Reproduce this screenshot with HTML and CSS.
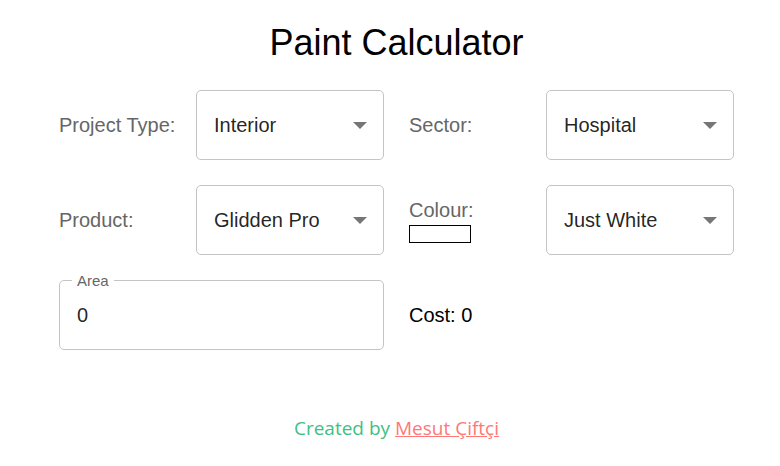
FILE: index.html
```html
<!DOCTYPE html>
<html>
<head>
<meta charset="utf-8">
<link rel="stylesheet" href="styles.css">
</head>
<body>
<div class="app">
  <h1 class="title">Paint Calculator</h1>
  <div class="form">
    <div class="label">Project Type:</div>
    <div class="select"><span>Interior</span><svg class="arrow" viewBox="0 0 14 7"><path d="M0 0h14L7 7z"/></svg></div>
    <div class="label second">Sector:</div>
    <div class="select"><span>Hospital</span><svg class="arrow" viewBox="0 0 14 7"><path d="M0 0h14L7 7z"/></svg></div>

    <div class="label">Product:</div>
    <div class="select"><span>Glidden Pro</span><svg class="arrow" viewBox="0 0 14 7"><path d="M0 0h14L7 7z"/></svg></div>
    <div class="label second colour">Colour:<div class="swatch"></div></div>
    <div class="select"><span>Just White</span><svg class="arrow" viewBox="0 0 14 7"><path d="M0 0h14L7 7z"/></svg></div>

    <div class="field">
      <span class="legend">Area</span>
      <span class="value">0</span>
    </div>
    <div class="cost">Cost: 0</div>
  </div>
  <footer class="footer">Created by <a class="link" href="#">Mesut Çiftçi</a></footer>
</div>
</body>
</html>
```

FILE: styles.css
```css
html, body {
  margin: 0;
  padding: 0;
  background: #fff;
}
body {
  padding-left: 13px;
  font-family: "Liberation Sans", Arial, sans-serif;
}
.app {
  width: 675px;
  margin: 0 auto;
}
.title {
  margin: 0;
  padding-top: 20px;
  height: 70px;
  box-sizing: border-box;
  font-size: 36px;
  font-weight: 400;
  text-align: center;
  color: #000;
  line-height: 46px;
}
.form {
  display: grid;
  grid-template-columns: 137px 188px 162px 188px;
  row-gap: 25px;
  margin-top: 20px;
}
.label {
  color: #666;
  font-size: 20px;
  height: 70px;
  display: flex;
  align-items: center;
}
.label.second {
  margin-left: 25px;
}
.label.colour {
  flex-direction: column;
  align-items: flex-start;
  justify-content: center;
  padding-top: 2px;
  box-sizing: border-box;
}
.swatch {
  width: 60px;
  height: 16px;
  border: 1px solid #000;
  background: #fff;
  margin-top: 3px;
}
.select {
  height: 70px;
  box-sizing: border-box;
  border: 1px solid #c4c4c4;
  border-radius: 5px;
  display: flex;
  align-items: center;
  justify-content: space-between;
  padding: 0 16px 0 17px;
  font-size: 20px;
  color: rgba(0,0,0,0.87);
}
.arrow {
  width: 14px;
  height: 7px;
  fill: #767676;
  margin-top: 1px;
}
.field {
  grid-column: 1 / span 2;
  position: relative;
  height: 70px;
  box-sizing: border-box;
  border: 1px solid #c4c4c4;
  border-radius: 5px;
  display: flex;
  align-items: center;
  padding-left: 17px;
  font-size: 20px;
  color: rgba(0,0,0,0.87);
}
.legend {
  position: absolute;
  top: -9px;
  left: 12px;
  padding: 0 5px;
  background: #fff;
  font-size: 15px;
  line-height: 17px;
  color: #666;
}
.cost {
  grid-column: 3 / span 2;
  margin-left: 25px;
  height: 70px;
  display: flex;
  align-items: center;
  font-size: 20px;
  color: #000;
}
.footer {
  margin-top: 65px;
  text-align: center;
  font-family: "Open Sans", "Noto Sans", sans-serif;
  font-size: 19px;
  color: #3fbf84;
}
.link {
  color: #ff7878;
  text-decoration: underline;
}
```
